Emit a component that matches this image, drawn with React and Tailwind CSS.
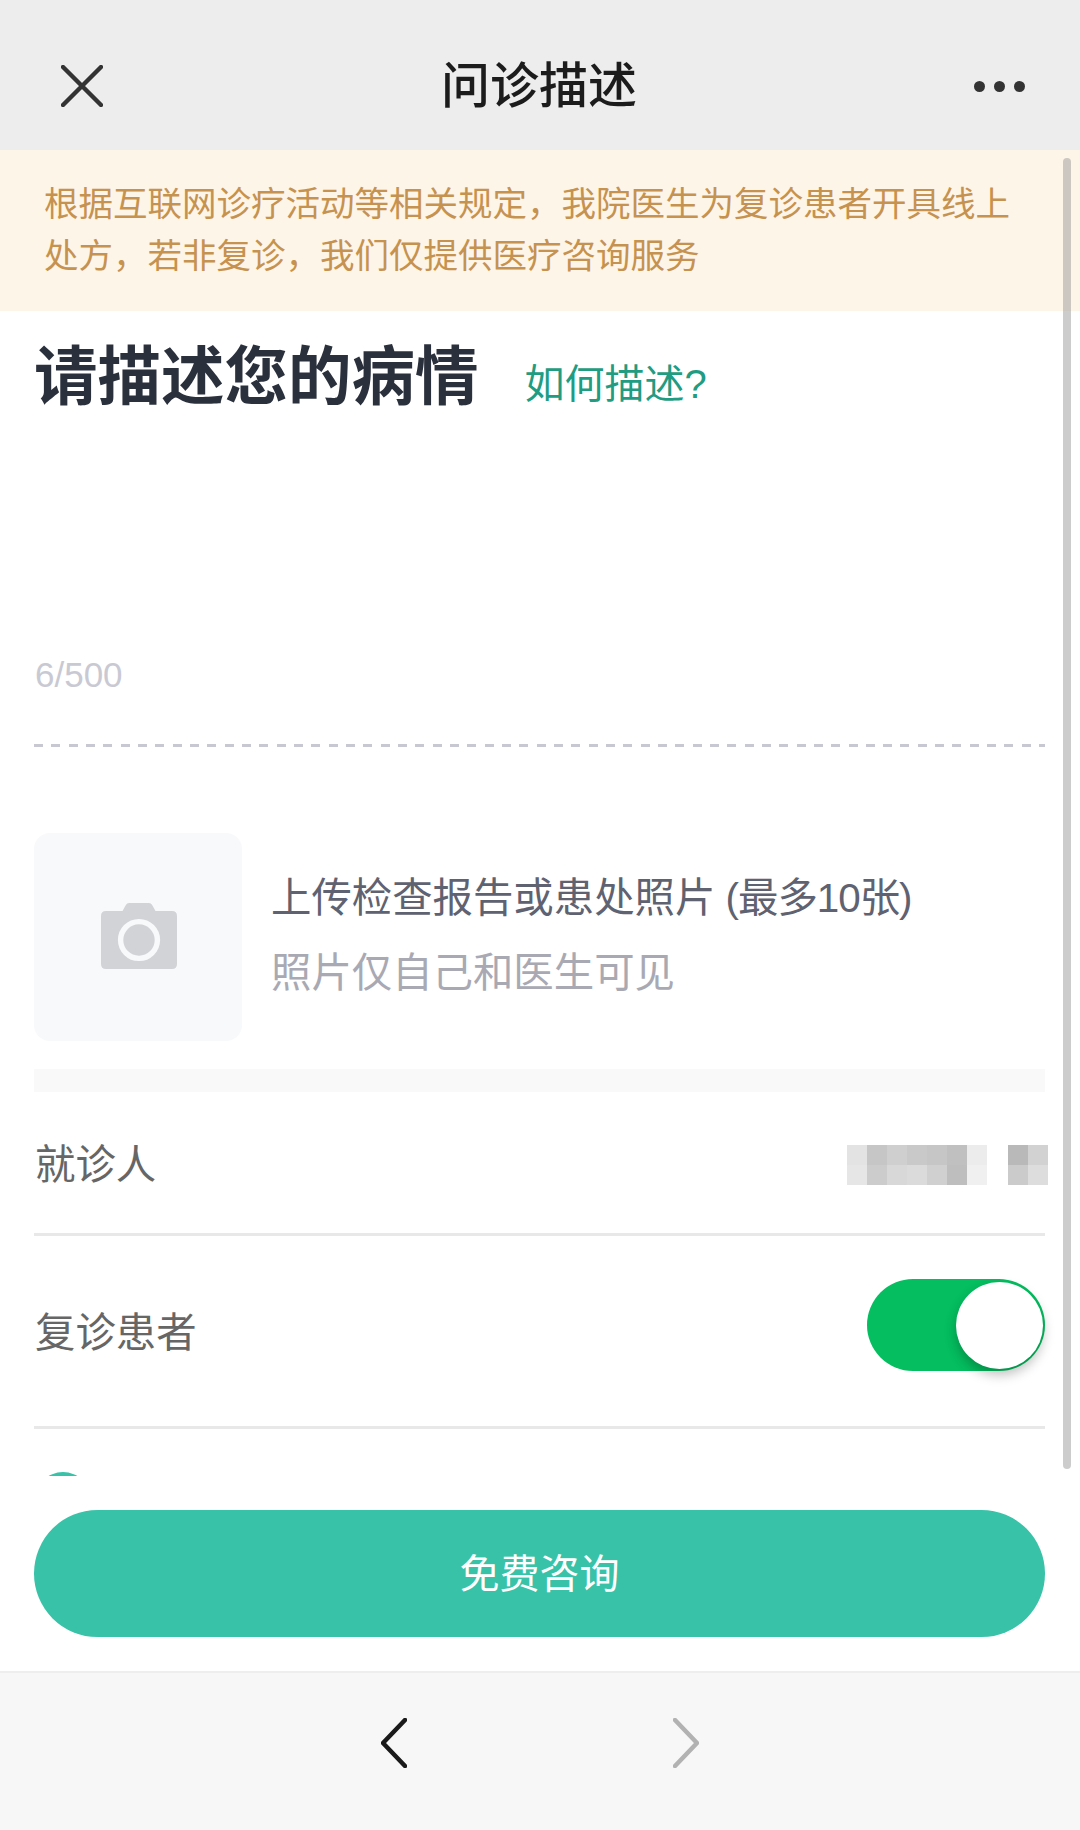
import React from "react";

const FONT = "font-['Liberation_Sans','Noto_Sans_CJK_SC',sans-serif]";

// blurred name in the patient row
const mosaicA = [
  "bg-[#e3e3e3]", "bg-[#c6c6c6]", "bg-[#cfcfcf]", "bg-[#c9c9c9]", "bg-[#c6c6c6]", "bg-[#c0c0c0]", "bg-[#ececec]",
  "bg-[#e6e6e6]", "bg-[#cccccc]", "bg-[#d8d8d8]", "bg-[#dbdbdb]", "bg-[#d0d0d0]", "bg-[#bebebe]", "bg-[#f0f0f0]",
];
const mosaicB = ["bg-[#b9b9b9]", "bg-[#d2d2d2]", "bg-[#cbcbcb]", "bg-[#dddddd]"];

function Mosaic() {
  return (
    <div className="flex gap-[20px] mr-[-3px]">
      <div className="grid grid-cols-[repeat(7,20px)] auto-rows-[20px] w-[141px] overflow-hidden">
        {mosaicA.map((c, i) => <div key={i} className={c} />)}
      </div>
      <div className="grid grid-cols-[repeat(2,20px)] auto-rows-[20px]">
        {mosaicB.map((c, i) => <div key={i} className={c} />)}
      </div>
    </div>
  );
}

function CameraIcon() {
  return (
    <svg width="76" height="66" viewBox="0 0 76 66" className="mb-[3px] ml-[2px]">
      <path d="M5 8h16.5l3.5-6.2Q26 0 28 0h20q2 0 3 1.8L54.5 8H71q5 0 5 5v48q0 5-5 5H5q-5 0-5-5V13q0-5 5-5z" fill="#d2d3d6" />
      <circle cx="38" cy="37" r="18.4" fill="none" stroke="#f8f9fb" strokeWidth="5.4" />
    </svg>
  );
}

export default function App() {
  return (
    <div className={`${FONT} w-[1080px] h-[1830px] flex flex-col bg-white overflow-hidden`}>
      {/* Top bar */}
      <header className="h-[150px] shrink-0 bg-[#ededed] grid grid-cols-[1fr_auto_1fr] items-center pt-[22px] pl-[61px] pr-[55px]">
        <svg width="42" height="42" viewBox="0 0 42 42" stroke="#333333" strokeWidth="4.4" strokeLinecap="round">
          <path d="M2 2l38 38M40 2L2 40" />
        </svg>
        <h1 className="text-[49px] leading-[60px] font-medium text-[#1c1c1c] ml-[-8px]">问诊描述</h1>
        <div className="flex justify-end gap-[9px]">
          <span className="w-[11px] h-[11px] rounded-full bg-[#333333]" />
          <span className="w-[11px] h-[11px] rounded-full bg-[#333333]" />
          <span className="w-[11px] h-[11px] rounded-full bg-[#333333]" />
        </div>
      </header>

      {/* Scrolling form */}
      <main className="relative h-[1326px] shrink-0 overflow-hidden">
        <div className="h-[161px] bg-[#fef5e9] pl-[44px] pr-[60px] pt-[28px] text-[34.5px] leading-[52px] text-[#c6924f]">
          根据互联网诊疗活动等相关规定，我院医生为复诊患者开具线上处方，若非复诊，我们仅提供医疗咨询服务
        </div>

        <div className="pl-[34px] pr-[35px]">
          <div className="flex items-center h-[128px] pt-[4px]">
            <h2 className="text-[63.5px] leading-[80px] font-bold text-[#2a303c]">请描述您的病情</h2>
            <a className="ml-[46px] mt-[14px] text-[40px] leading-[50px] text-[#1f9c82]">如何描述?</a>
          </div>

          <div className="mt-[216px] ml-[1px] h-[40px] text-[35px] leading-[40px] text-[#c9c9d3]">6/500</div>
          <div className="mt-[49px] h-[3px] bg-[repeating-linear-gradient(90deg,#c8c8d2_0,#c8c8d2_9px,transparent_9px,transparent_17.33px)]" />

          {/* Upload */}
          <div className="mt-[86px] flex items-center">
            <div className="w-[208px] h-[208px] shrink-0 rounded-[16px] bg-[#f8f9fb] flex items-center justify-center">
              <CameraIcon />
            </div>
            <div className="ml-[29px] mb-[4px]">
              <p className="text-[40.4px] leading-[50px] text-[#5f6270]">
                上传检查报告或患处照片<span className="tracking-[-1px]"> (最多10张)</span>
              </p>
              <p className="mt-[25px] text-[40.4px] leading-[50px] text-[#a9a9b3]">照片仅自己和医生可见</p>
            </div>
          </div>

          <div className="mt-[28px] h-[23px] bg-[#f9f9f9]" />

          {/* Patient row */}
          <div className="h-[144px] border-b-[3px] border-[#e8e8e8] flex items-center justify-between pt-[4px]">
            <span className="ml-[1px] text-[40.4px] leading-[50px] text-[#666666]">就诊人</span>
            <Mosaic />
          </div>

          {/* Follow-up row */}
          <div className="h-[193px] border-b-[3px] border-[#e8e8e8] flex items-center justify-between">
            <span className="ml-[1px] mt-[3px] text-[40.4px] leading-[50px] text-[#666666]">复诊患者</span>
            <div className="w-[178px] h-[92px] rounded-full bg-[#04be5f] flex items-center justify-end pr-[2px] mb-[12px]">
              <div className="w-[87px] h-[87px] rounded-full bg-white shadow-[0_6px_12px_rgba(0,0,0,0.25)]" />
            </div>
          </div>

          {/* Next row is cut off by the fold */}
          <div className="mt-[43px] ml-[1px] w-[56px] h-[56px] rounded-full bg-[#38c2a8]" />
        </div>

        {/* Scrollbar */}
        <div className="absolute left-[1063px] top-[8px] w-[8px] h-[1311px] rounded-full bg-[#9a9a9a]/50" />
      </main>

      {/* Submit */}
      <div className="h-[195px] shrink-0 pl-[34px] pr-[35px] pt-[34px]">
        <button className="w-full h-[127px] rounded-full bg-[#38c2a8] text-white text-[40px] leading-[50px]">免费咨询</button>
      </div>

      {/* Browser nav */}
      <footer className="flex-1 bg-[#f7f7f7] border-t-[2px] border-[#eeeeee] flex items-start justify-center gap-[266px] pt-[45px]">
        <svg width="26" height="50" viewBox="0 0 26 50" fill="none" stroke="#1a1a1a" strokeWidth="4.5" strokeLinecap="round" strokeLinejoin="round">
          <path d="M24 2L2 25l22 23" />
        </svg>
        <svg width="26" height="50" viewBox="0 0 26 50" fill="none" stroke="#b2b2b2" strokeWidth="4.5" strokeLinecap="round" strokeLinejoin="round">
          <path d="M2 2l22 23L2 48" />
        </svg>
      </footer>
    </div>
  );
}
